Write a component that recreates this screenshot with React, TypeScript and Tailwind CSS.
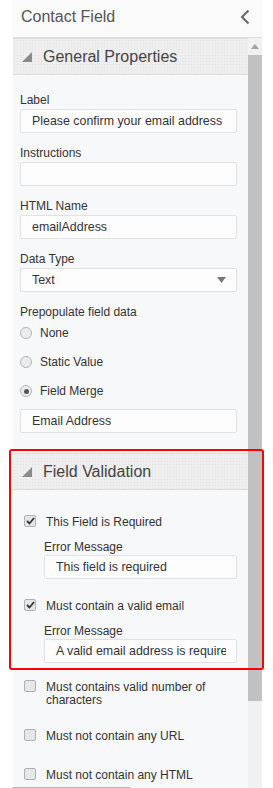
import React from "react";

const font = { fontFamily: '"Liberation Sans", Arial, sans-serif' };

function Band({ title }: { title: string }) {
  return (
    <div className="flex h-[37px] items-center gap-[11px] border-y border-[#dcdcdc] bg-[#eeeeee] bg-[radial-gradient(#e3e3e3_1px,transparent_1px)] bg-[size:3px_3px] pl-[9px]">
      <svg width="10" height="10" viewBox="0 0 10 10">
        <polygon points="10,0 10,10 0,10" fill="#8a8a8a" />
      </svg>
      <span className="text-[16px] text-[#444]">{title}</span>
    </div>
  );
}

function Field({ label, value }: { label: string; value?: string }) {
  return (
    <div className="flex flex-col">
      <div className="flex h-[18px] items-center text-[12px] text-[#333]">{label}</div>
      <Box value={value} />
    </div>
  );
}

function Box({ value, children }: { value?: string; children?: React.ReactNode }) {
  return (
    <div className="flex h-[24px] items-center justify-between whitespace-nowrap rounded-[2px] border border-[#e1e1e1] bg-[#fdfdfd] pl-[11px] pr-[10px] text-[12.4px] text-[#333]">
      <span className="min-w-0 overflow-hidden">{value}</span>
      {children}
    </div>
  );
}

function Radio({ label, checked }: { label: string; checked?: boolean }) {
  return (
    <div className="flex h-[24px] items-center gap-[8px] text-[12px] text-[#333]">
      <span className="flex size-[12px] items-center justify-center rounded-full border border-[#b5b5b5] bg-[#ececec]">
        {checked && <span className="size-[5px] rounded-full bg-[#555]" />}
      </span>
      {label}
    </div>
  );
}

function Check({ checked }: { checked?: boolean }) {
  return (
    <span className="flex size-[12px] shrink-0 items-center justify-center rounded-[2px] border border-[#b0b0b0] bg-[#e6e6e6]">
      {checked && (
        <svg width="9" height="8" viewBox="0 0 9 8">
          <polyline points="1,4 3.5,6.5 8,1" fill="none" stroke="#333" strokeWidth="1.8" />
        </svg>
      )}
    </span>
  );
}

function CheckRow({ label, checked }: { label: React.ReactNode; checked?: boolean }) {
  return (
    <div className="flex items-start gap-[10px] pl-[11px] text-[12px] leading-[13px] text-[#333]">
      <Check checked={checked} />
      <span className="pt-[1px]">{label}</span>
    </div>
  );
}

export default function App() {
  return (
    <div className="relative h-[788px] w-[273px] overflow-hidden bg-white" style={font}>
      <div className="ml-[13px] w-[249px]">
        <div className="flex h-[38px] items-center justify-between border-b border-[#dedede] bg-[#fafafa] pb-[4px] pl-[8px] pr-[12px]">
          <span className="text-[16px] text-[#555]">Contact Field</span>
          <svg width="10" height="16" viewBox="0 0 10 16">
            <polyline points="8.5,1.5 2,8 8.5,14.5" fill="none" stroke="#666" strokeWidth="2" />
          </svg>
        </div>

        <div className="flex">
          <div className="w-[235px] bg-[#f7f8fa]">
            <Band title="General Properties" />
            <div className="flex flex-col gap-[11px] pb-[20px] pl-[7px] pr-[11px] pt-[16px]">
              <Field label="Label" value="Please confirm your email address" />
              <Field label="Instructions" />
              <Field label="HTML Name" value="emailAddress" />
              <div className="flex flex-col">
                <div className="flex h-[18px] items-center text-[12px] text-[#333]">Data Type</div>
                <Box value="Text">
                  <svg width="9" height="6" viewBox="0 0 9 6">
                    <polygon points="0,0 9,0 4.5,6" fill="#777" />
                  </svg>
                </Box>
              </div>
              <div className="flex flex-col">
                <div className="flex h-[18px] items-center text-[12px] text-[#333]">Prepopulate field data</div>
                <div className="flex flex-col gap-[5px]">
                  <Radio label="None" />
                  <Radio label="Static Value" />
                  <Radio label="Field Merge" checked />
                </div>
                <div className="mt-[6px]">
                  <Box value="Email Address" />
                </div>
              </div>
            </div>

            <Band title="Field Validation" />
            <div className="flex flex-col pr-[11px] pt-[25px]">
              <CheckRow label="This Field is Required" checked />
              <div className="ml-[31px] mt-[9px] flex flex-col">
                <div className="flex h-[17px] items-center text-[12px] text-[#333]">Error Message</div>
                <Box value="This field is required" />
              </div>
              <div className="mt-[20px]">
                <CheckRow label="Must contain a valid email" checked />
              </div>
              <div className="ml-[31px] mt-[9px] flex flex-col">
                <div className="flex h-[17px] items-center text-[12px] text-[#333]">Error Message</div>
                <Box value="A valid email address is required" />
              </div>
              <div className="mt-[17px]">
                <CheckRow
                  label={
                    <>
                      Must contains valid number of
                      <br />
                      characters
                    </>
                  }
                />
              </div>
              <div className="mt-[22px]">
                <CheckRow label="Must not contain any URL" />
              </div>
              <div className="mt-[25px]">
                <CheckRow label="Must not contain any HTML" />
              </div>
              <div className="h-[40px]" />
            </div>
          </div>

          <div className="flex w-[14px] flex-col bg-[#f1f1f1]">
            <div className="flex h-[17px] items-center justify-center">
              <svg width="8" height="5" viewBox="0 0 8 5">
                <polygon points="0,5 8,5 4,0" fill="#a3a3a3" />
              </svg>
            </div>
            <div className="h-[646px] bg-[#c1c1c1]" />
          </div>
        </div>
      </div>

      <div className="absolute bottom-0 left-[13px] h-px w-[117px] bg-[#b5b5b5]" />
      <div className="pointer-events-none absolute left-[9px] top-[449px] h-[221px] w-[255px] rounded-[3px] border-2 border-[#f00]" />
    </div>
  );
}
